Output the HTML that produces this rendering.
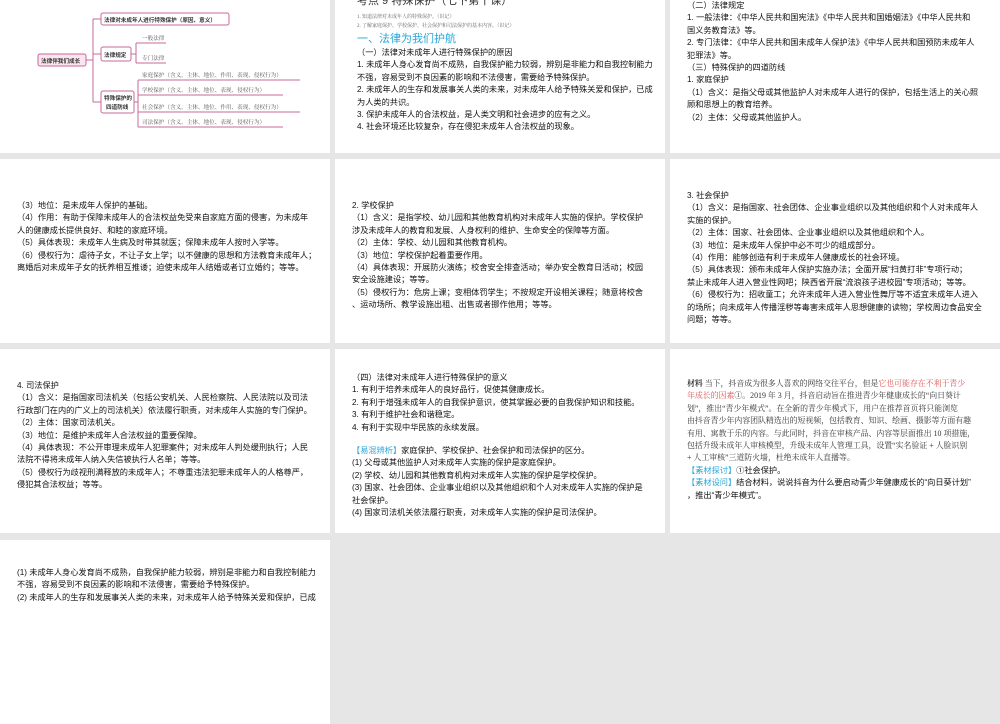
<!DOCTYPE html>
<html><head><meta charset="utf-8">
<style>
*{margin:0;padding:0;box-sizing:border-box}
body{width:1000px;height:600px;overflow:hidden;background:#e6e6e6;position:relative;font-family:"Liberation Sans","Noto Sans CJK SC",sans-serif;color:#111}
.p{position:absolute;background:#fff;width:330px;height:184px;overflow:hidden}
.t{position:absolute;font-size:8.2px;line-height:12.4px;white-space:nowrap;color:#111}
.blue{color:#2aa6d9}
.red{color:#d9534f}
.serif{font-family:"Liberation Serif","Noto Serif CJK SC",serif}
</style></head><body>

<!-- Row 1 -->
<div class="p" style="left:0;top:-31px">
<svg width="330" height="184" style="position:absolute;left:0;top:31px;overflow:visible" font-family="Liberation Sans, Noto Sans CJK SC, sans-serif">
 <g fill="none" stroke="#c9679a" stroke-width="1">
  <path d="M86 60 H93 M93 19 V102 M93 19 H101 M93 54 H101 M93 102 H101"/>
  <path d="M131 54 H136 M136 43 V63 M136 43 H166 M136 63 H166"/>
  <path d="M134 102 H138 M138 80 V127 M138 80 H300 M138 95 H283 M138 112 H300 M138 127 H283"/>
 </g>
 <rect x="38" y="54" width="48" height="12" rx="2" fill="#fbe6ef" stroke="#c9679a"/>
 <rect x="101" y="13" width="128" height="12" rx="2" fill="#fff" stroke="#c9679a"/>
 <rect x="101" y="47" width="30" height="14" rx="2" fill="#fff" stroke="#c9679a"/>
 <rect x="101" y="91" width="33" height="22" rx="2" fill="#fff" stroke="#c9679a"/>
 <g font-size="5.6" fill="#333" font-weight="bold">
  <text x="41" y="63">法律伴我们成长</text>
  <text x="104" y="22">法律对未成年人进行特殊保护（原因、意义）</text>
  <text x="104" y="57">法律规定</text>
  <text x="104" y="100">特殊保护的</text>
  <text x="106" y="109">四道防线</text>
 </g>
 <g font-size="5.6" fill="#555" font-family="Liberation Serif, Noto Serif CJK SC, serif">
  <text x="142" y="40">一般法律</text>
  <text x="142" y="60">专门法律</text>
  <text x="142" y="77">家庭保护（含义、主体、地位、作用、表现、侵权行为）</text>
  <text x="142" y="92">学校保护（含义、主体、地位、表现、侵权行为）</text>
  <text x="142" y="109">社会保护（含义、主体、地位、作用、表现、侵权行为）</text>
  <text x="142" y="124">司法保护（含义、主体、地位、表现、侵权行为）</text>
 </g>
</svg>
</div>

<div class="p" style="left:335px;top:-31px">
 <div class="t" style="left:22px;top:26px;font-size:11px;color:#333">考点 9  特殊保护（七下第十课）</div>
 <div class="t serif" style="left:22px;top:44px;font-size:5px;line-height:9px;color:#666">1. 知道法律对未成年人的特殊保护。（识记）<br>2. 了解家庭保护、学校保护、社会保护和司法保护的基本内容。（识记）</div>
 <div class="t blue" style="left:22px;top:63px;font-size:11px;line-height:14px">一、法律为我们护航</div>
 <div class="t" style="left:22px;top:78px">（一）法律对未成年人进行特殊保护的原因<br>1. 未成年人身心发育尚不成熟，自我保护能力较弱，辨别是非能力和自我控制能力<br>不强，容易受到不良因素的影响和不法侵害，需要给予特殊保护。<br>2. 未成年人的生存和发展事关人类的未来，对未成年人给予特殊关爱和保护，已成<br>为人类的共识。<br>3. 保护未成年人的合法权益，是人类文明和社会进步的应有之义。<br>4. 社会环境还比较复杂，存在侵犯未成年人合法权益的现象。</div>
</div>

<div class="p" style="left:670px;top:-31px">
 <div class="t" style="left:17px;top:31px">（二）法律规定<br>1. 一般法律：《中华人民共和国宪法》《中华人民共和国婚姻法》《中华人民共和<br>国义务教育法》等。<br>2. 专门法律：《中华人民共和国未成年人保护法》《中华人民共和国预防未成年人<br>犯罪法》等。<br>（三）特殊保护的四道防线<br>1. 家庭保护<br>（1）含义：是指父母或其他监护人对未成年人进行的保护，包括生活上的关心照<br>顾和思想上的教育培养。<br>（2）主体：父母或其他监护人。</div>
</div>

<!-- Row 2 -->
<div class="p" style="left:0;top:159px">
 <div class="t" style="left:17px;top:41px">（3）地位：是未成年人保护的基础。<br>（4）作用：有助于保障未成年人的合法权益免受来自家庭方面的侵害，为未成年<br>人的健康成长提供良好、和睦的家庭环境。<br>（5）具体表现：未成年人生病及时带其就医；保障未成年人按时入学等。<br>（6）侵权行为：虐待子女，不让子女上学；以不健康的思想和方法教育未成年人；<br>离婚后对未成年子女的抚养相互推诿；迫使未成年人结婚或者订立婚约；等等。</div>
</div>
<div class="p" style="left:335px;top:159px">
 <div class="t" style="left:17px;top:41px">2. 学校保护<br>（1）含义：是指学校、幼儿园和其他教育机构对未成年人实施的保护。学校保护<br>涉及未成年人的教育和发展、人身权利的维护、生命安全的保障等方面。<br>（2）主体：学校、幼儿园和其他教育机构。<br>（3）地位：学校保护起着重要作用。<br>（4）具体表现：开展防火演练；校舍安全排查活动；举办安全教育日活动；校园<br>安全设施建设；等等。<br>（5）侵权行为：危房上课；变相体罚学生；不按规定开设相关课程；随意将校舍<br>、运动场所、教学设施出租、出售或者挪作他用；等等。</div>
</div>
<div class="p" style="left:670px;top:159px">
 <div class="t" style="left:17px;top:31px">3. 社会保护<br>（1）含义：是指国家、社会团体、企业事业组织以及其他组织和个人对未成年人<br>实施的保护。<br>（2）主体：国家、社会团体、企业事业组织以及其他组织和个人。<br>（3）地位：是未成年人保护中必不可少的组成部分。<br>（4）作用：能够创造有利于未成年人健康成长的社会环境。<br>（5）具体表现：颁布未成年人保护实施办法；全面开展“扫黄打非”专项行动；<br>禁止未成年人进入营业性网吧；陕西省开展“流浪孩子进校园”专项活动；等等。<br>（6）侵权行为：招收童工；允许未成年人进入营业性舞厅等不适宜未成年人进入<br>的场所；向未成年人传播淫秽等毒害未成年人思想健康的读物；学校周边食品安全<br>问题；等等。</div>
</div>

<!-- Row 3 -->
<div class="p" style="left:0;top:349px">
 <div class="t" style="left:17px;top:31px">4. 司法保护<br>（1）含义：是指国家司法机关（包括公安机关、人民检察院、人民法院以及司法<br>行政部门在内的广义上的司法机关）依法履行职责，对未成年人实施的专门保护。<br>（2）主体：国家司法机关。<br>（3）地位：是维护未成年人合法权益的重要保障。<br>（4）具体表现：不公开审理未成年人犯罪案件；对未成年人判处缓刑执行；人民<br>法院不得将未成年人纳入失信被执行人名单；等等。<br>（5）侵权行为歧视刑满释放的未成年人；不尊重违法犯罪未成年人的人格尊严，<br>侵犯其合法权益；等等。</div>
</div>
<div class="p" style="left:335px;top:349px">
 <div class="t" style="left:17px;top:23px">（四）法律对未成年人进行特殊保护的意义<br>1. 有利于培养未成年人的良好品行，促使其健康成长。<br>2. 有利于增强未成年人的自我保护意识，使其掌握必要的自我保护知识和技能。<br>3. 有利于维护社会和谐稳定。<br>4. 有利于实现中华民族的永续发展。</div>
 <div class="t" style="left:17px;top:96px"><span class="blue">【易混辨析】</span>家庭保护、学校保护、社会保护和司法保护的区分。<br>(1) 父母或其他监护人对未成年人实施的保护是家庭保护。<br>(2) 学校、幼儿园和其他教育机构对未成年人实施的保护是学校保护。<br>(3) 国家、社会团体、企业事业组织以及其他组织和个人对未成年人实施的保护是<br>社会保护。<br>(4) 国家司法机关依法履行职责，对未成年人实施的保护是司法保护。</div>
</div>
<div class="p" style="left:670px;top:349px">
 <div class="t serif" style="left:17px;top:29px;font-size:7.9px;line-height:12.4px;color:#333"><b>材料</b> 当下，抖音成为很多人喜欢的网络交往平台，但是<span class="red">它也可能存在不利于青少<br>年成长的因素</span>①。2019 年 3 月，抖音启动旨在推进青少年健康成长的“向日葵计<br>划”，推出“青少年模式”。在全新的青少年模式下，用户在推荐首页将只能浏览<br>由抖音青少年内容团队精选出的短视频，包括教育、知识、绘画、摄影等方面有趣<br>有用、寓教于乐的内容。与此同时，抖音在审核产品、内容等层面推出 10 项措施，<br>包括升级未成年人审核模型，升级未成年人管理工具，设置“实名验证 + 人脸识别<br>+ 人工审核”三道防火墙，杜绝未成年人直播等。</div>
 <div class="t" style="left:17px;top:116px"><span class="blue">【素材探讨】</span>①社会保护。<br><span class="blue">【素材设问】</span>结合材料，说说抖音为什么要启动青少年健康成长的“向日葵计划”<br>，推出“青少年模式”。</div>
</div>

<!-- Row 4 -->
<div class="p" style="left:0;top:540px">
 <div class="t" style="left:17px;top:27px">(1) 未成年人身心发育尚不成熟，自我保护能力较弱，辨别是非能力和自我控制能力<br>不强，容易受到不良因素的影响和不法侵害，需要给予特殊保护。<br>(2) 未成年人的生存和发展事关人类的未来，对未成年人给予特殊关爱和保护，已成</div>
</div>

</body></html>
